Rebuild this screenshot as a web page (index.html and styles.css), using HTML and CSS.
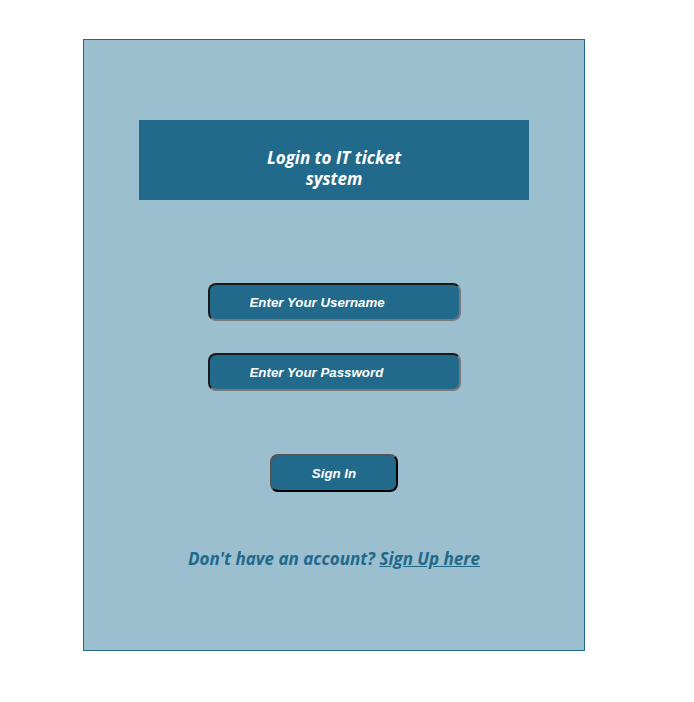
FILE: index.html
```html
<!DOCTYPE html>
<html>
<head>
<meta charset="utf-8">
<link rel="stylesheet" href="styles.css">
</head>
<body>
<div class="card">
  <div class="header"><h2 class="title">Login to IT ticket system</h2></div>
  <form class="form">
    <input class="field" type="text" placeholder="Enter Your Username">
    <input class="field" type="password" placeholder="Enter Your Password">
    <button class="btn" type="button">Sign In</button>
  </form>
  <p class="signup">Don't have an account? <a href="#" class="link">Sign Up here</a></p>
</div>
</body>
</html>
```
FILE: styles.css
```css
html, body { margin: 0; padding: 0; background: #fff; }
body { padding: 39px 0 0 83px; }
.card {
  width: 500px;
  height: 610px;
  background: #9bbfcf;
  border: 1px solid #21698b;
  box-sizing: content-box;
}
.header {
  margin: 80px 55px 0;
  height: 80px;
  background: #216a8b;
  display: flex;
  justify-content: center;
  box-sizing: border-box;
  padding-top: 27px;
}
.title {
  margin: 0;
  width: 160px;
  text-align: center;
  color: #fff;
  font-family: "Open Sans", sans-serif;
  font-size: 17px;
  font-weight: 700;
  font-style: italic;
  line-height: 21px;
}
.form {
  display: flex;
  flex-direction: column;
  align-items: center;
  margin-top: 83px;
}
.field {
  width: 253px;
  height: 38px;
  box-sizing: border-box;
  border: 2px solid #7a7a7a;
  border-top-color: #1a1a1a;
  border-left-color: #1a1a1a;
  border-radius: 8px;
  background: #216a8b;
  padding: 0 0 0 40px;
  font-family: "Liberation Sans", Arial, sans-serif;
  font-size: 13.3px;
  font-weight: 700;
  font-style: italic;
  color: #fff;
  margin-bottom: 32px;
}
.field::placeholder { color: #fff; opacity: 1; }
.btn {
  margin-top: 31px;
  width: 128px;
  height: 38px;
  box-sizing: border-box;
  border: 2px solid #000;
  border-top-color: #555;
  border-left-color: #555;
  border-radius: 8px;
  background: #216a8b;
  color: #fff;
  font-family: "Liberation Sans", Arial, sans-serif;
  font-size: 13.3px;
  font-weight: 700;
  font-style: italic;
}
.signup {
  margin: 55px 0 0;
  text-align: center;
  color: #21698b;
  font-family: "Open Sans", sans-serif;
  font-size: 17px;
  font-weight: 700;
  font-style: italic;
}
.link { color: #21698b; text-decoration: underline; }
```
